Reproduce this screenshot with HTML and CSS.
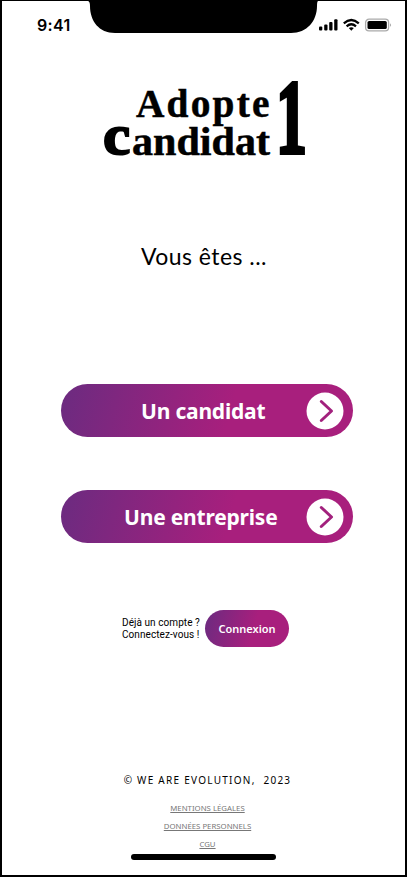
FILE: index.html
```html
<!DOCTYPE html>
<html lang="fr">
<head>
<meta charset="utf-8">
<title>Adopte 1 Candidat</title>
<link rel="stylesheet" href="styles.css">
</head>
<body>
<div class="phone">
  <header class="status">
    <span class="time">9:41</span>
    <svg class="notch" width="230" height="32" viewBox="0 0 230 32"><path d="M0 0Q2 .5 2 5C2 20 11 32 27 32H203C219 32 229 20 229 5Q229 .5 230 0Z"/></svg>
    <svg class="indicators" width="74" height="14" viewBox="0 0 74 14">
      <rect x="0" y="8.5" width="3.3" height="4" rx="1"/><rect x="5.2" y="6.5" width="3.3" height="6" rx="1"/><rect x="10.2" y="4" width="3.3" height="8.5" rx="1"/><rect x="15.2" y="1.3" width="3.3" height="11.2" rx="1"/>
      <g fill="none" stroke="#000" stroke-width="2.2"><path d="M24.8 5.4Q32.3 -1.4 39.8 5.4M27.6 8.3Q32.3 4.2 37 8.3"/></g>
      <path d="M29.8 10.1Q32.3 8.2 34.8 10.1L32.3 12.7Z"/>
      <rect x="46.6" y="1.2" width="23" height="11.6" rx="3.4" fill="none" stroke="#aaa" stroke-width="1.3"/>
      <rect x="48.5" y="3" width="19.3" height="8" rx="1.6"/><path d="M71 5.2Q73.2 7 71 8.8Z" fill="#aaa"/>
    </svg>
  </header>
  <main>
    <svg class="logo" width="204" height="78" viewBox="0 0 204 78" role="img" aria-label="Adopte 1 Candidat">
      <text transform="translate(34 36.5) scale(.96 1)" font-size="41" textLength="139" lengthAdjust="spacing">Adopte</text>
      <text class="initial" transform="translate(1 73.5) scale(1.06 1)" font-size="58">c</text>
      <text x="30" y="74.5" font-size="39" textLength="138" lengthAdjust="spacingAndGlyphs">andidat</text>
      <text class="one" transform="translate(174 73) scale(.59 1)" font-size="105">1</text>
    </svg>
    <h1 class="question">Vous êtes ...</h1>
    <nav class="choices">
      <a class="choice"><span class="label candidate">Un candidat</span><svg class="arrow" width="38" height="38" viewBox="0 0 38 38"><circle cx="19" cy="19" r="18.5"/><path d="M15.3 9.5L25.5 19L15.3 28.5"/></svg></a>
      <a class="choice"><span class="label company">Une entreprise</span><svg class="arrow" width="38" height="38" viewBox="0 0 38 38"><circle cx="19" cy="19" r="18.5"/><path d="M15.3 9.5L25.5 19L15.3 28.5"/></svg></a>
    </nav>
    <section class="login"><p>Déjà un compte ?<br>Connectez-vous !</p><a class="connect">Connexion</a></section>
  </main>
  <footer>
    <p class="copyright">© WE ARE EVOLUTION,&nbsp; 2023</p>
    <a>MENTIONS LÉGALES</a><a>DONNÉES PERSONNELS</a><a>CGU</a>
    <div class="home"></div>
  </footer>
</div>
</body>
</html>
```
FILE: styles.css
```css
* { box-sizing: border-box; }
body { margin: 0; background: #fff; color: #000; }
p, h1 { margin: 0; }
.phone { width: 407px; height: 877px; border: 2px solid #000; border-top-width: 1px; overflow: hidden; font-family: "Noto Sans", sans-serif; }
.status { display: flex; align-items: flex-start; height: 79px; }
.time { width: 86px; padding: 14px 0 0 35px; font: 600 16px/20px Inter, sans-serif; letter-spacing: .3px; white-space: nowrap; }
.notch { flex: none; }
.indicators { margin: 17px 0 0 1px; flex: none; }
main { display: flex; flex-direction: column; }
.logo { margin-left: 100px; overflow: visible; font-family: "Liberation Serif", serif; font-weight: 700; }
.logo text { stroke: #000; stroke-width: .5px; }
.logo .initial { stroke-width: 2px; }
.logo .one { stroke-width: 4px; }
.question { margin: 82px 0 0 139px; height: 32px; font: 400 23px/32px Lato, sans-serif; letter-spacing: .45px; white-space: nowrap; }
.choices { display: grid; gap: 53px; margin: 112px 0 0 59px; width: 292px; }
.choice { display: flex; align-items: center; justify-content: space-between; height: 53px; padding: 0 9px 0 0; border-radius: 27px; background: linear-gradient(105deg, #6b2b80, #a81f7d 58%); }
.label { color: #fff; font-weight: 700; font-size: 21px; line-height: 30px; letter-spacing: -.2px; white-space: nowrap; }
.candidate { margin-left: 80px; }
.company { margin-left: 63px; }
.arrow circle { fill: #fff; }
.arrow path { fill: none; stroke: #a2217d; stroke-width: 3; stroke-linecap: round; stroke-linejoin: round; }
.login { display: flex; align-items: center; margin: 67px 0 0 120px; height: 36px; }
.login p { width: 83px; padding-top: 1px; font: 10px/12px Roboto, sans-serif; letter-spacing: .07px; white-space: nowrap; }
.connect { width: 84px; height: 37px; border-radius: 19px; background: linear-gradient(105deg, #6b2b80, #a81f7d 58%); color: #fff; font: 600 11px/37px "Noto Sans", sans-serif; text-align: center; }
footer { display: flex; flex-direction: column; align-items: center; margin-top: 126px; }
.copyright { font-size: 10px; line-height: 16px; letter-spacing: 1.27px; margin-left: 8px; margin-bottom: 11px; white-space: nowrap; }
footer a { height: 18px; margin-left: 8px; font-size: 7.8px; line-height: 18px; color: #777; text-decoration: underline; }
.home { width: 145px; height: 6px; margin-top: 1px; border-radius: 3px; background: #000; }
```
